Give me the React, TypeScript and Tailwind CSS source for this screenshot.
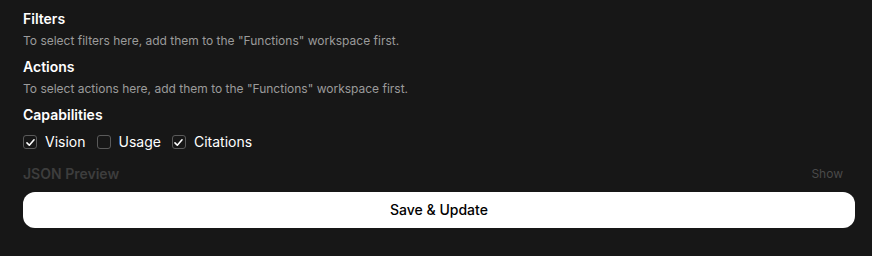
import React from "react";

function Check({ checked }: { checked: boolean }) {
  return (
    <div className="w-[14px] h-[14px] rounded-[3px] border border-[#5a5a5a] flex items-center justify-center">
      {checked && (
        <svg viewBox="0 0 14 14" className="w-[11px] h-[11px]" fill="none" stroke="white" strokeWidth="2" strokeLinecap="round" strokeLinejoin="round">
          <path d="M2.5 7.5 L5.5 10.5 L11.5 3.5" />
        </svg>
      )}
    </div>
  );
}

export default function App() {
  return (
    <div className="w-[872px] h-[256px] bg-[#171717] text-white pl-[23px] pr-[17px] pt-[9px]" style={{ fontFamily: "Inter, 'Noto Sans', sans-serif" }}>
      <div className="flex flex-col">
        <div className="text-sm font-semibold leading-5">Filters</div>
        <div className="text-xs text-[#9b9b9b] mt-[4px] leading-4">To select filters here, add them to the "Functions" workspace first.</div>
        <div className="text-sm font-semibold leading-5 mt-[8px]">Actions</div>
        <div className="text-xs text-[#9b9b9b] mt-[4px] leading-4">To select actions here, add them to the "Functions" workspace first.</div>
        <div className="text-sm font-semibold leading-5 mt-[8px]">Capabilities</div>
        <div className="flex items-center mt-[7px] text-sm leading-5">
          <div className="flex items-center gap-2 mr-[11px]">
            <Check checked />
            <span>Vision</span>
          </div>
          <div className="flex items-center gap-2 mr-[11px]">
            <Check checked={false} />
            <span>Usage</span>
          </div>
          <div className="flex items-center gap-2">
            <Check checked />
            <span>Citations</span>
          </div>
        </div>
        <div className="flex items-center justify-between mt-[12px] pr-[12px]">
          <div className="text-sm font-semibold leading-5 text-[#3d3d3d]">JSON Preview</div>
          <div className="text-xs text-[#4a4a4a] leading-4">Show</div>
        </div>
        <button className="mt-[8px] h-[36px] w-full rounded-xl bg-white text-black text-sm font-medium">Save &amp; Update</button>
      </div>
    </div>
  );
}
